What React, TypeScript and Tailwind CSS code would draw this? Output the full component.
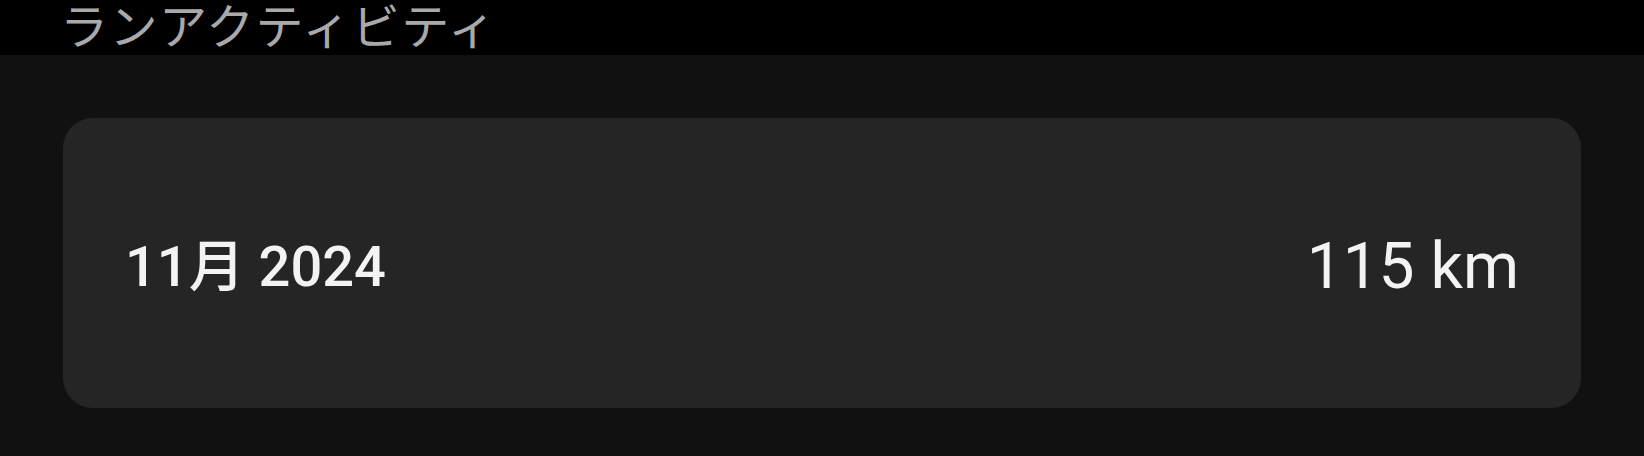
export default function App() {
  return (
    <div className="min-h-[456px] bg-[#111111]" style={{ fontFamily: 'Roboto, "Noto Sans CJK JP", sans-serif' }}>
      <div className="h-[55px] overflow-hidden bg-black">
        <div
          className="pl-[60px] text-[48px] leading-[46px] tracking-[1.5px] text-[#a9a9a9]"
          style={{ fontFamily: '"Noto Sans CJK JP", sans-serif' }}
        >
          ランアクティビティ
        </div>
      </div>
      <div className="px-[63px] pt-[63px]">
        <div className="flex h-[290px] items-center justify-between rounded-[30px] bg-[#252525] px-[62px] pt-[7px] text-[#f3f3f3]">
          <span className="text-[56px] font-medium leading-none">11月 2024</span>
          <span className="text-[64px] leading-none">115 km</span>
        </div>
      </div>
    </div>
  )
}
